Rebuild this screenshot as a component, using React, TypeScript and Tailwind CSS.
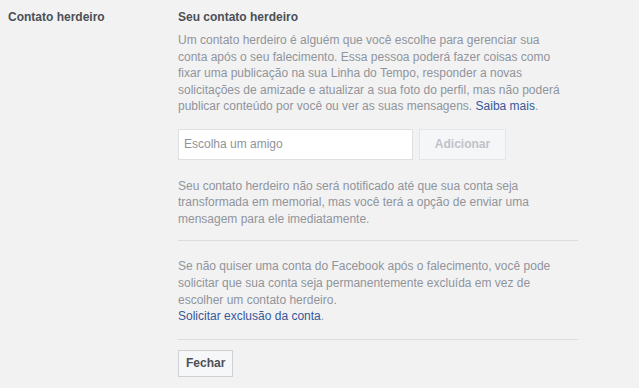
import React from "react";

export default function App() {
  return (
    <div className="w-[639px] h-[388px] bg-[#f2f2f2] flex font-['Liberation_Sans',Arial,sans-serif] text-[12px] leading-[1.38] overflow-hidden">
      <div className="w-[178px] shrink-0 pl-[8px] pt-[9px] font-bold text-[#4b4f56]">
        Contato herdeiro
      </div>
      <div className="w-[400px] shrink-0 pt-[9px]">
        <div className="font-bold text-[#4b4f56]">Seu contato herdeiro</div>
        <p className="mt-[6.5px] text-[#90949c]">
          Um contato herdeiro é alguém que você escolhe para gerenciar sua
          <br />
          conta após o seu falecimento. Essa pessoa poderá fazer coisas como
          <br />
          fixar uma publicação na sua Linha do Tempo, responder a novas
          <br />
          solicitações de amizade e atualizar a sua foto do perfil, mas não poderá
          <br />
          publicar conteúdo por você ou ver as suas mensagens.{" "}
          <a className="text-[#365899]">Saiba mais</a>.
        </p>
        <div className="mt-[14px] flex gap-[6px]">
          <input
            className="w-[235px] h-[31px] bg-white border border-[#dddfe2] px-[5px] text-[12px] text-[#4b4f56] placeholder:text-[#90949c] outline-none"
            placeholder="Escolha um amigo"
          />
          <button className="w-[87px] h-[31px] bg-[#f5f6f7] border border-[#e4e6e9] text-[#bec3c9] font-bold">
            Adicionar
          </button>
        </div>
        <p className="mt-[18px] text-[#90949c]">
          Seu contato herdeiro não será notificado até que sua conta seja
          <br />
          transformada em memorial, mas você terá a opção de enviar uma
          <br />
          mensagem para ele imediatamente.
        </p>
        <div className="mt-[13px] border-t border-[#dadde1]" />
        <p className="mt-[17px] text-[#90949c]">
          Se não quiser uma conta do Facebook após o falecimento, você pode
          <br />
          solicitar que sua conta seja permanentemente excluída em vez de
          <br />
          escolher um contato herdeiro.
          <br />
          <a className="text-[#365899]">Solicitar exclusão da conta</a>.
        </p>
        <div className="mt-[14px] border-t border-[#dadde1]" />
        <button className="mt-[10px] h-[27px] px-[7px] bg-[#f6f7f9] border border-[#ced0d4] text-[#4b4f56] font-bold">
          Fechar
        </button>
      </div>
    </div>
  );
}
